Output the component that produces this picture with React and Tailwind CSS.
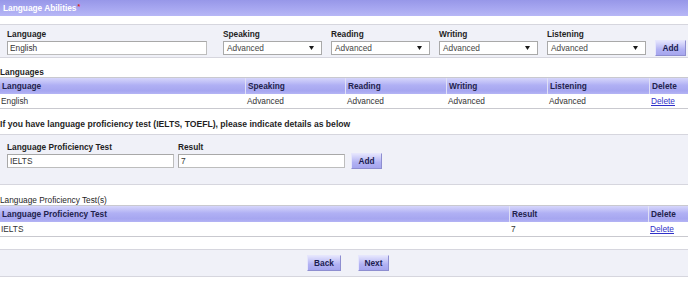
import React from "react";

const Arrow = () => (
  <svg width="5" height="4" viewBox="0 0 5 4" className="shrink-0">
    <polygon points="0,0 5,0 2.5,4" fill="#1a1a1a" />
  </svg>
);

function Select({ w, value }) {
  return (
    <div
      className={`${w} h-[14px] border border-[#a9a9a9] bg-white flex items-center justify-between pl-[3px] pr-[7px] text-[#444]`}
    >
      <span className="leading-[12px]">{value}</span>
      <Arrow />
    </div>
  );
}

function Btn({ children, w }) {
  return (
    <div
      className={`${w} h-[16px] flex items-center justify-center font-bold text-[#1c1c50] border border-t-[#e6e6fc] border-l-[#e6e6fc] border-r-[#8e8ed0] border-b-[#8e8ed0] bg-[linear-gradient(to_bottom,#e4e4fd,#b2b2f3_60%,#a5a5ee)]`}
    >
      {children}
    </div>
  );
}

function Field({ label, children, className = "" }) {
  return (
    <div className={`flex flex-col ${className}`}>
      <div className="h-[10px] leading-[10px] font-bold text-[#1f1f1f] mb-[2px]">{label}</div>
      {children}
    </div>
  );
}

function TextInput({ w, value }) {
  return (
    <div
      className={`${w} h-[14px] border border-[#bdbdbd] border-t-[#a8a8a8] border-l-[#a8a8a8] bg-white pl-[2px] leading-[12px] text-[#333]`}
    >
      {value}
    </div>
  );
}

const headGrad = "bg-[linear-gradient(to_bottom,#d6d6fb,#b0b0f4_45%,#a6a6f0_80%,#b4b4f5)]";

function Table({ cols, head, row }) {
  return (
    <div className="w-[688px] border-t border-b border-[#c9c9cf]">
      <div className={`flex h-[16px] ${headGrad}`}>
        {head.map((h, i) => (
          <div
            key={i}
            style={{ width: cols[i] }}
            className={`h-full flex items-center pl-[2px] font-bold text-[#23234d] ${i > 0 ? "border-l border-[#e0e0f6]" : ""}`}
          >
            {h}
          </div>
        ))}
      </div>
      <div className="flex h-[14px] bg-white">
        {row.map((c, i) => (
          <div
            key={i}
            style={{ width: cols[i] }}
            className={`h-full flex items-center text-[#333] ${i > 0 ? "pl-[2px]" : "pl-[1px]"}`}
          >
            {c === "Delete" && i === row.length - 1 ? (
              <span className="text-[#3030c8] underline">Delete</span>
            ) : (
              c
            )}
          </div>
        ))}
      </div>
    </div>
  );
}

export default function App() {
  return (
    <div className="w-[688px] h-[282px] overflow-hidden bg-white font-['Liberation_Sans',Arial,sans-serif] text-[8.3px] flex flex-col">
      <div className="h-[16px] shrink-0 bg-[linear-gradient(to_bottom,#9797e8,#a6a6f0_50%,#b7b7f6)] flex items-center pl-[3px]">
        <span className="font-bold text-white">Language Abilities</span>
        <span className="text-[#e02a2a] text-[7px] font-bold self-start mt-[2px] ml-[1px]">*</span>
      </div>

      <div className="mt-[8px] h-[34px] shrink-0 bg-[#f0f1f8] border-y border-[#d6d6de] pt-[4px] pl-[7px] flex items-start">
        <Field label="Language" className="mr-[16px]">
          <TextInput w="w-[200px]" value="English" />
        </Field>
        <Field label="Speaking" className="mr-[9px]">
          <Select w="w-[99px]" value="Advanced" />
        </Field>
        <Field label="Reading" className="mr-[9px]">
          <Select w="w-[99px]" value="Advanced" />
        </Field>
        <Field label="Writing" className="mr-[9px]">
          <Select w="w-[99px]" value="Advanced" />
        </Field>
        <Field label="Listening" className="mr-[9px]">
          <Select w="w-[99px]" value="Advanced" />
        </Field>
        <div className="mt-[11px]">
          <Btn w="w-[31px]">Add</Btn>
        </div>
      </div>

      <div className="mt-[9px] h-[10px] leading-[10px] font-bold text-[#1f1f1f] shrink-0">Languages</div>
      <div className="shrink-0">
        <Table
          cols={[245, 100, 101, 101, 102, 39]}
          head={["Language", "Speaking", "Reading", "Writing", "Listening", "Delete"]}
          row={["English", "Advanced", "Advanced", "Advanced", "Advanced", "Delete"]}
        />
      </div>

      <div className="mt-[10px] h-[10px] leading-[10px] font-bold text-[8.6px] text-[#1f1f1f] shrink-0">
        If you have language proficiency test (IELTS, TOEFL), please indicate details as below
      </div>

      <div className="mt-[5px] h-[51px] shrink-0 bg-[#f0f1f8] border-y border-[#d6d6de] pt-[7px] pl-[7px] flex items-start">
        <Field label="Language Proficiency Test" className="mr-[4px]">
          <TextInput w="w-[167px]" value="IELTS" />
        </Field>
        <Field label="Result" className="mr-[6px]">
          <TextInput w="w-[167px]" value="7" />
        </Field>
        <div className="mt-[11px]">
          <Btn w="w-[31px]">Add</Btn>
        </div>
      </div>

      <div className="mt-[10px] h-[10px] leading-[10px] text-[#1f1f1f] shrink-0">Language Proficiency Test(s)</div>
      <div className="shrink-0">
        <Table
          cols={[509, 139, 40]}
          head={["Language Proficiency Test", "Result", "Delete"]}
          row={["IELTS", "7", "Delete"]}
        />
      </div>

      <div className="mt-[12px] h-[28px] shrink-0 bg-[#f0f1f8] border-y border-[#d6d6de] flex items-start justify-center pt-[5px] pl-[8px] gap-[17px]">
        <Btn w="w-[34px]">Back</Btn>
        <Btn w="w-[31px]">Next</Btn>
      </div>
    </div>
  );
}
